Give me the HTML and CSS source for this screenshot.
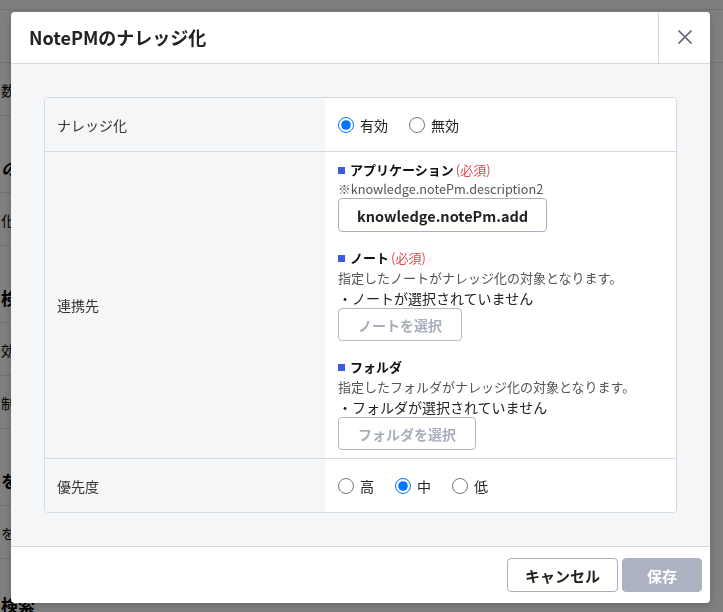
FILE: index.html
```html
<!DOCTYPE html>
<html lang="ja">
<head>
    <meta charset="UTF-8">
    <meta name="viewport" content="width=device-width, initial-scale=1.0">
    <link rel="stylesheet" href="styles.css">
    <title>NotePMのナレッジ化</title>
</head>
<body>
    <!-- page behind the dialog -->
    <div class="page">
        <div class="topbar"></div>
        <div class="pagehead"></div>
        <ul class="list">
            <li class="item">数</li>
            <li class="head">の</li>
            <li class="item">化</li>
            <li class="head">検</li>
            <li class="item">効</li>
            <li class="item">制</li>
            <li class="head">を</li>
            <li class="item">を</li>
            <li class="head">検索</li>
        </ul>
    </div>

    <div class="overlay">
        <div class="modal">
            <div class="modal-head">
                <h2>NotePMのナレッジ化</h2>
                <button class="close" aria-label="閉じる">
                    <svg width="16" height="16" viewBox="0 0 16 16"><path d="M1.5 1.5 14.5 14.5M14.5 1.5 1.5 14.5" stroke="#5d6271" stroke-width="1.7" fill="none"/></svg>
                </button>
            </div>

            <div class="modal-body">
                <div class="form">
                    <div class="label">ナレッジ化</div>
                    <div class="value">
                        <label class="radio"><input type="radio" name="enable" checked>有効</label>
                        <label class="radio"><input type="radio" name="enable">無効</label>
                    </div>

                    <div class="label">連携先</div>
                    <div class="value stack">
                        <div class="field">
                            <p class="field-title">アプリケーション<span class="req">(必須)</span></p>
                            <p class="note short">※knowledge.notePm.description2</p>
                            <button class="pick big">knowledge.notePm.add</button>
                        </div>
                        <div class="field">
                            <p class="field-title">ノート<span class="req">(必須)</span></p>
                            <p class="note">指定したノートがナレッジ化の対象となります。</p>
                            <p class="status">・ノートが選択されていません</p>
                            <button class="pick" disabled>ノートを選択</button>
                        </div>
                        <div class="field">
                            <p class="field-title">フォルダ</p>
                            <p class="note">指定したフォルダがナレッジ化の対象となります。</p>
                            <p class="status">・フォルダが選択されていません</p>
                            <button class="pick" disabled>フォルダを選択</button>
                        </div>
                    </div>

                    <div class="label last">優先度</div>
                    <div class="value last">
                        <label class="radio"><input type="radio" name="prio">高</label>
                        <label class="radio"><input type="radio" name="prio" checked>中</label>
                        <label class="radio"><input type="radio" name="prio">低</label>
                    </div>
                </div>
            </div>

            <div class="modal-foot">
                <button class="btn">キャンセル</button>
                <button class="btn primary" disabled>保存</button>
            </div>
        </div>
    </div>
</body>
</html>
```

FILE: styles.css
```css
*{ box-sizing: border-box; }
body{ margin: 0; background: #fff; color: #222; font-family: "Noto Sans CJK JP", "Noto Sans", sans-serif; font-size: 14px; }
p{ margin: 0; }

/* background page */
.topbar{ height: 10px; border-bottom: 1px solid #e2e2e2; background: #fcfcfc; }
.pagehead{ height: 53px; border-bottom: 1px solid #e2e2e2; }
.list{ list-style: none; margin: 0; padding: 0; width: 320px; }
.list li{ border-bottom: 1px solid #e2e2e2; padding-left: 1px; white-space: nowrap; color: #000; }
.item{ height: 53px; padding-top: 2px; line-height: 50px; font-size: 14px; }
.head{ height: 77px; padding-top: 40px; line-height: 24px; font-size: 17px; font-weight: bold; }
.list li:nth-child(2){ font-style: italic; }
.list li:last-child{ height: 60px; border-bottom: 0; padding-top: 36px; line-height: 20px; }

/* dialog */
.overlay{ position: fixed; inset: 0; background: rgba(0, 0, 0, 0.5); padding: 12px 0 0 11px; }
.modal{ width: 699px; background: #fff; border-radius: 4px; overflow: hidden; box-shadow: 0 2px 8px rgba(0, 0, 0, 0.2); }

.modal-head{ display: flex; height: 52px; border-bottom: 1px solid #d3d8e2; }
.modal-head h2{ flex: 1; margin: 0; padding-left: 18px; font-size: 18px; font-weight: bold; line-height: 51px; color: #222; }
.close{ width: 52px; border: 0; border-left: 1px solid #d3d8e2; background: #fff; display: flex; align-items: center; justify-content: center; padding: 0 0 1px 1px; }

.modal-body{ background: #f5f6f8; padding: 33px; }
.form{ display: grid; grid-template-columns: 280px 1fr; border: 1px solid #d3d8e2; border-radius: 4px; overflow: hidden; background: #fff; }
.label{ background: #f5f6f8; padding-left: 12px; display: flex; align-items: center; min-height: 54px; border-bottom: 1px solid #d3d8e2; color: #333; }
.value{ background: #fff; padding-left: 13px; display: flex; align-items: center; min-height: 54px; border-bottom: 1px solid #d3d8e2; }
.label.last, .value.last{ border-bottom: 0; min-height: 53px; }

.radio{ display: flex; align-items: center; gap: 6px; margin-right: 21px; color: #222; }
.radio input{ width: 16px; height: 16px; margin: 0; }

.stack{ flex-direction: column; align-items: flex-start; padding: 8px 13px 8px; gap: 16px; }
.field{ display: flex; flex-direction: column; align-items: flex-start; }
.field-title{ font-size: 13px; font-weight: bold; line-height: 20px; color: #111; }
.field-title::before{ content: ""; display: inline-block; width: 7px; height: 7px; background: #3d5bd9; margin-right: 5px; vertical-align: 1px; }
.req{ color: #e5484d; font-weight: normal; margin-left: 2px; }
.note{ font-size: 13px; line-height: 20px; color: #555; }
.note.short{ line-height: 18px; font-size: 12.7px; }
.status{ font-size: 14px; line-height: 20px; color: #222; }

.pick{ height: 33px; padding: 0 19px; border: 1px solid #b3b8c4; border-radius: 4px; background: #fff; font-family: inherit; font-size: 14px; font-weight: bold; color: #222; }
.pick.big{ font-size: 14.5px; padding: 0 18px; border-color: #a9afbb; height: 34px; }
.pick:disabled{ color: #a9aebb; }

.modal-foot{ display: flex; justify-content: flex-end; gap: 4px; padding: 11px 8px 11px; border-top: 1px solid #d3d8e2; }
.btn{ height: 34px; padding: 0 17px; border: 1px solid #a9afbb; border-radius: 4px; background: #fff; font-family: inherit; font-size: 15px; font-weight: bold; color: #222; }
.btn.primary{ min-width: 80px; border-color: #adb2c0; background: #adb2c0; color: #fff; }
```
